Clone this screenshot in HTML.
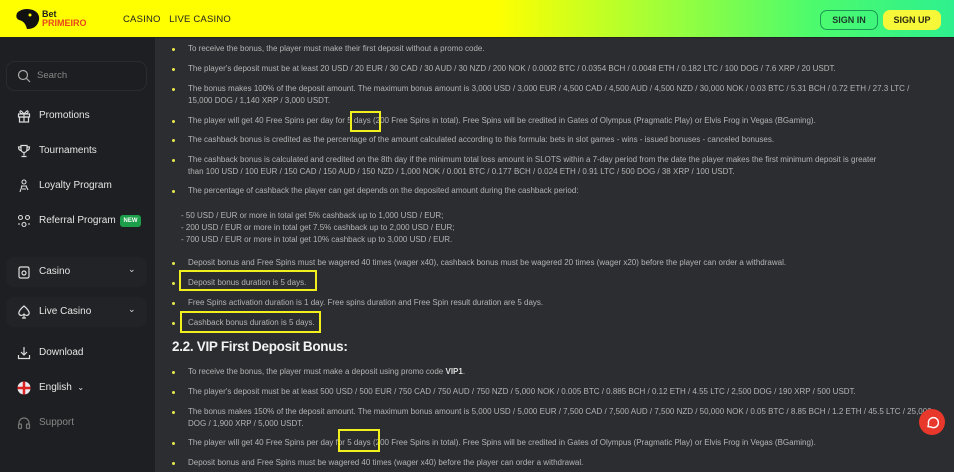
<!DOCTYPE html><html><head><style>
*{margin:0;padding:0;box-sizing:border-box}
body{width:954px;height:472px;overflow:hidden;background:#2c2d31;font-family:"Liberation Sans",sans-serif;position:relative}
.hdr{position:absolute;left:0;top:0;width:954px;height:38px;background:linear-gradient(90deg,#ffff00 0,#ffff00 52%,#b8ff2a 65%,#4dfb6c 85%,#2ef08e 100%);border-bottom:1px solid #222}
.side{position:absolute;left:0;top:38px;width:155px;height:434px;background:#1e1f22}
.t{position:absolute;font-size:8px;color:#b4b4b4;white-space:nowrap;line-height:12px}
.b{position:absolute;width:3px;height:3px;background:#e8e84a;border-radius:50%}
.box{position:absolute;border:2px solid #f2ef1e}
.si{position:absolute;left:39px;font-size:10px;color:#e6e6e6}
.ic{position:absolute;left:17px}
</style></head><body>
<div class="hdr">
<svg style="position:absolute;left:13px;top:7px" width="30" height="24" viewBox="0 0 30 24"><path d="M4 6 Q10 0 20 3 Q27 6 26 13 Q24 22 14 22 Q12 14 6 13 Q2 11 4 6Z" fill="#111"/><circle cx="17" cy="8" r="1.5" fill="#ff0"/></svg>
<div style="position:absolute;left:42px;top:10px;font-size:9px;font-weight:bold;line-height:9px;color:#222">Bet<br><span style="color:#e8461c">PRIMEIRO</span></div>
<div style="position:absolute;left:123px;top:14px;font-size:9.5px;color:#222;letter-spacing:.2px">CASINO&nbsp;&nbsp;&nbsp;LIVE CASINO</div>
<div style="position:absolute;left:820px;top:10px;width:58px;height:20px;border:1px solid #1a9a55;border-radius:7px;font-size:9px;color:#1c3a2a;text-align:center;line-height:18px;font-weight:bold">SIGN IN</div>
<div style="position:absolute;left:883px;top:10px;width:58px;height:20px;background:#f7f73a;border-radius:7px;font-size:9px;color:#2a2a10;text-align:center;line-height:20px;font-weight:bold">SIGN UP</div>
</div>
<div class="side">
<div style="position:absolute;left:6px;top:23px;width:141px;height:30px;border:1px solid #2a2b2f;border-radius:9px;background:#1d1e21"></div>
<svg class="ic" style="top:31px" width="14" height="14" viewBox="0 0 14 14"><circle cx="6" cy="6" r="4.5" fill="none" stroke="#aaa" stroke-width="1.2"/><path d="M9.5 9.5L13 13" stroke="#aaa" stroke-width="1.2"/></svg>
<div class="si" style="left:37px;top:32px;color:#888;font-size:9.5px">Search</div>
<div style="position:absolute;left:6px;top:219px;width:141px;height:30px;border-radius:9px;background:#222326"></div>
<div style="position:absolute;left:6px;top:259px;width:141px;height:30px;border-radius:9px;background:#222326"></div>
</div>
<svg class="ic" style="top:109px" width="14" height="14" viewBox="0 0 14 14" fill="none" stroke="#ddd" stroke-width="1.2"><rect x="1.5" y="5" width="11" height="3"/><rect x="2.5" y="8" width="9" height="5"/><path d="M7 5v8M7 5Q3 0 3 3Q3 5 7 5Q11 0 11 3Q11 5 7 5"/></svg>
<div class="si" style="top:110px">Promotions</div>
<svg class="ic" style="top:144px" width="14" height="14" viewBox="0 0 14 14" fill="none" stroke="#ddd" stroke-width="1.2"><path d="M4 1.5h6v4a3 3 0 0 1-6 0zM4 3H1.5q0 3 2.5 3.5M10 3h2.5q0 3-2.5 3.5M7 8.5v3M4.5 12.5h5"/></svg>
<div class="si" style="top:145px">Tournaments</div>
<svg class="ic" style="top:179px" width="14" height="14" viewBox="0 0 14 14" fill="none" stroke="#ddd" stroke-width="1.1"><circle cx="7" cy="3" r="2"/><path d="M4 7h6M5 7l-2 6M9 7l2 4M5 10h4"/></svg>
<div class="si" style="top:180px">Loyalty Program</div>
<svg class="ic" style="top:214px" width="14" height="14" viewBox="0 0 14 14" fill="none" stroke="#ddd" stroke-width="1.1"><circle cx="3.5" cy="3.5" r="2"/><circle cx="10.5" cy="3.5" r="2"/><circle cx="7" cy="10.5" r="2"/><path d="M1 10h2M11 10h2"/></svg>
<div class="si" style="top:215px">Referral Program</div>
<div style="position:absolute;left:120px;top:215px;width:21px;height:12px;background:#1c9e4a;border-radius:3px;font-size:6px;color:#fff;font-weight:bold;text-align:center;line-height:12px">NEW</div>
<svg class="ic" style="top:265px" width="14" height="14" viewBox="0 0 14 14" fill="none" stroke="#ddd" stroke-width="1.2"><rect x="2" y="2" width="10" height="11" rx="1.5"/><circle cx="7" cy="8" r="2"/></svg>
<div class="si" style="top:266px">Casino</div>
<div style="position:absolute;left:128px;top:264px;color:#ddd;font-size:9px">⌄</div>
<svg class="ic" style="top:305px" width="14" height="14" viewBox="0 0 14 14" fill="none" stroke="#ddd" stroke-width="1.2"><path d="M7 1Q1 6 2 9Q4 12 7 9Q10 12 12 9Q13 6 7 1ZM7 9v4M5 13h4"/></svg>
<div class="si" style="top:306px">Live Casino</div>
<div style="position:absolute;left:128px;top:304px;color:#ddd;font-size:9px">⌄</div>
<svg class="ic" style="top:346px" width="14" height="14" viewBox="0 0 14 14" fill="none" stroke="#ddd" stroke-width="1.2"><path d="M7 1v8M4 6l3 3 3-3M1.5 9v3.5h11V9"/></svg>
<div class="si" style="top:347px">Download</div>
<svg class="ic" style="top:381px" width="14" height="14" viewBox="0 0 14 14"><circle cx="7" cy="7" r="6.5" fill="#e8eaf0"/><path d="M7 .5v13M.5 7h13" stroke="#d22" stroke-width="2.5"/></svg>
<div class="si" style="top:382px">English&nbsp; <span style="font-size:8px">⌄</span></div>
<svg class="ic" style="top:416px" width="14" height="14" viewBox="0 0 14 14" fill="none" stroke="#777" stroke-width="1.2"><path d="M2 9V7a5 5 0 0 1 10 0v2"/><rect x="1.5" y="8" width="3" height="4.5" rx="1"/><rect x="9.5" y="8" width="3" height="4.5" rx="1"/></svg>
<div class="si" style="top:417px;color:#888">Support</div>

<div class="b" style="left:172px;top:48px"></div><div class="t" style="left:188px;top:43px">To receive the bonus, the player must make their first deposit without a promo code.</div>
<div class="b" style="left:172px;top:68px"></div><div class="t" style="left:188px;top:63px">The player's deposit must be at least 20 USD / 20 EUR / 30 CAD / 30 AUD / 30 NZD / 200 NOK / 0.0002 BTC / 0.0354 BCH / 0.0048 ETH / 0.182 LTC / 100 DOG / 7.6 XRP / 20 USDT.</div>
<div class="b" style="left:172px;top:88px"></div><div class="t" style="left:188px;top:83px">The bonus makes 100% of the deposit amount. The maximum bonus amount is 3,000 USD / 3,000 EUR / 4,500 CAD / 4,500 AUD / 4,500 NZD / 30,000 NOK / 0.03 BTC / 5.31 BCH / 0.72 ETH / 27.3 LTC /<br>15,000 DOG / 1,140 XRP / 3,000 USDT.</div>
<div class="b" style="left:172px;top:120px"></div><div class="t" style="left:188px;top:115px">The player will get 40 Free Spins per day for 5 days (200 Free Spins in total). Free Spins will be credited in Gates of Olympus (Pragmatic Play) or Elvis Frog in Vegas (BGaming).</div>
<div class="b" style="left:172px;top:139px"></div><div class="t" style="left:188px;top:134px">The cashback bonus is credited as the percentage of the amount calculated according to this formula: bets in slot games - wins - issued bonuses - canceled bonuses.</div>
<div class="b" style="left:172px;top:159px"></div><div class="t" style="left:188px;top:154px">The cashback bonus is calculated and credited on the 8th day if the minimum total loss amount in SLOTS within a 7-day period from the date the player makes the first minimum deposit is greater<br>than 100 USD / 100 EUR / 150 CAD / 150 AUD / 150 NZD / 1,000 NOK / 0.001 BTC / 0.177 BCH / 0.024 ETH / 0.91 LTC / 500 DOG / 38 XRP / 100 USDT.</div>
<div class="b" style="left:172px;top:190px"></div><div class="t" style="left:188px;top:185px">The percentage of cashback the player can get depends on the deposited amount during the cashback period:</div>
<div class="t" style="left:181px;top:210px">- 50 USD / EUR or more in total get 5% cashback up to 1,000 USD / EUR;<br>- 200 USD / EUR or more in total get 7.5% cashback up to 2,000 USD / EUR;<br>- 700 USD / EUR or more in total get 10% cashback up to 3,000 USD / EUR.</div>
<div class="b" style="left:172px;top:262px"></div><div class="t" style="left:188px;top:257px">Deposit bonus and Free Spins must be wagered 40 times (wager x40), cashback bonus must be wagered 20 times (wager x20) before the player can order a withdrawal.</div>
<div class="b" style="left:172px;top:282px"></div><div class="t" style="left:188px;top:277px">Deposit bonus duration is 5 days.</div>
<div class="b" style="left:172px;top:302px"></div><div class="t" style="left:188px;top:297px">Free Spins activation duration is 1 day. Free spins duration and Free Spin result duration are 5 days.</div>
<div class="b" style="left:172px;top:322px"></div><div class="t" style="left:188px;top:317px">Cashback bonus duration is 5 days.</div>
<div style="position:absolute;left:172px;top:339px;font-size:13.5px;font-weight:bold;color:#f2f2f2;letter-spacing:-0.3px">2.2. VIP First Deposit Bonus:</div>
<div class="b" style="left:172px;top:371px"></div><div class="t" style="left:188px;top:366px">To receive the bonus, the player must make a deposit using promo code <b style="color:#ddd">VIP1</b>.</div>
<div class="b" style="left:172px;top:391px"></div><div class="t" style="left:188px;top:386px">The player's deposit must be at least 500 USD / 500 EUR / 750 CAD / 750 AUD / 750 NZD / 5,000 NOK / 0.005 BTC / 0.885 BCH / 0.12 ETH / 4.55 LTC / 2,500 DOG / 190 XRP / 500 USDT.</div>
<div class="b" style="left:172px;top:411px"></div><div class="t" style="left:188px;top:406px">The bonus makes 150% of the deposit amount. The maximum bonus amount is 5,000 USD / 5,000 EUR / 7,500 CAD / 7,500 AUD / 7,500 NZD / 50,000 NOK / 0.05 BTC / 8.85 BCH / 1.2 ETH / 45.5 LTC / 25,000<br>DOG / 1,900 XRP / 5,000 USDT.</div>
<div class="b" style="left:172px;top:442px"></div><div class="t" style="left:188px;top:437px">The player will get 40 Free Spins per day for 5 days (200 Free Spins in total). Free Spins will be credited in Gates of Olympus (Pragmatic Play) or Elvis Frog in Vegas (BGaming).</div>
<div class="b" style="left:172px;top:462px"></div><div class="t" style="left:188px;top:457px">Deposit bonus and Free Spins must be wagered 40 times (wager x40) before the player can order a withdrawal.</div>
<div class="box" style="left:350px;top:111px;width:31px;height:21px"></div>
<div class="box" style="left:179px;top:270px;width:138px;height:21px"></div>
<div class="box" style="left:180px;top:311px;width:141px;height:22px"></div>
<div class="box" style="left:338px;top:429px;width:42px;height:23px"></div>
<div style="position:absolute;left:919px;top:409px;width:26px;height:26px;border-radius:50%;background:#e8372b"></div>
<svg style="position:absolute;left:925px;top:415px" width="14" height="14" viewBox="0 0 14 14" fill="none" stroke="#fff" stroke-width="1.4"><path d="M3 11.5l.6-2.5A5 5 0 1 1 6 12z"/></svg>
</body></html>
